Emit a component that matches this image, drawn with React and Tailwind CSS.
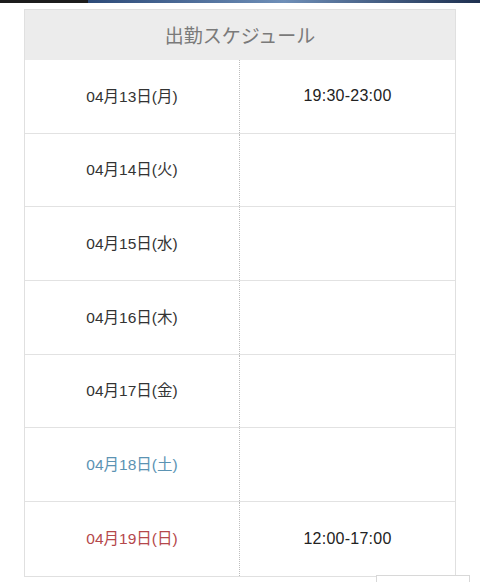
import React from "react";

const rows = [
  { d: "04月13日(月)", t: "19:30-23:00", c: "text-[#333333]" },
  { d: "04月14日(火)", t: "", c: "text-[#333333]" },
  { d: "04月15日(水)", t: "", c: "text-[#333333]" },
  { d: "04月16日(木)", t: "", c: "text-[#333333]" },
  { d: "04月17日(金)", t: "", c: "text-[#333333]" },
  { d: "04月18日(土)", t: "", c: "text-[#5b93b3]" },
  { d: "04月19日(日)", t: "12:00-17:00", c: "text-[#b5484b]" },
];

export default function App() {
  return (
    <div
      className="w-[480px] h-[582px] bg-white overflow-hidden relative"
      style={{ fontFamily: '"Liberation Sans", "Noto Sans CJK JP", sans-serif' }}
    >
      <div className="flex h-[3px]">
        <div className="w-[88px] bg-[#1c1c1c]" />
        <div className="flex-1 bg-gradient-to-r from-[#2c4a78] via-[#6f8fb8] to-[#1e3050]" />
      </div>
      <div className="mt-[6px] mx-[24px] border border-[#e0e0e0] w-[432px]">
        <div
          className="h-[50px] bg-[#ececec] flex items-center justify-center text-[19px] text-[#7a7a7a]"
          style={{ fontFamily: '"Noto Sans CJK JP", sans-serif' }}
        >
          出勤スケジュール
        </div>
        {rows.map((r, i) => (
          <div
            key={i}
            className={`flex h-[73.7px] ${i < rows.length - 1 ? "border-b border-[#e2e2e2]" : ""}`}
          >
            <div className={`w-[215px] flex items-center justify-center text-[15.5px] ${r.c} border-r border-dotted border-[#bdbdbd]`}>
              {r.d}
            </div>
            <div className="flex-1 flex items-center justify-center text-[16px] tracking-[0.25px] text-[#222222]">
              {r.t}
            </div>
          </div>
        ))}
      </div>
      <div className="absolute left-[376px] top-[575px] w-[94px] h-[20px] border border-[#d8d8d8] bg-white" />
    </div>
  );
}
